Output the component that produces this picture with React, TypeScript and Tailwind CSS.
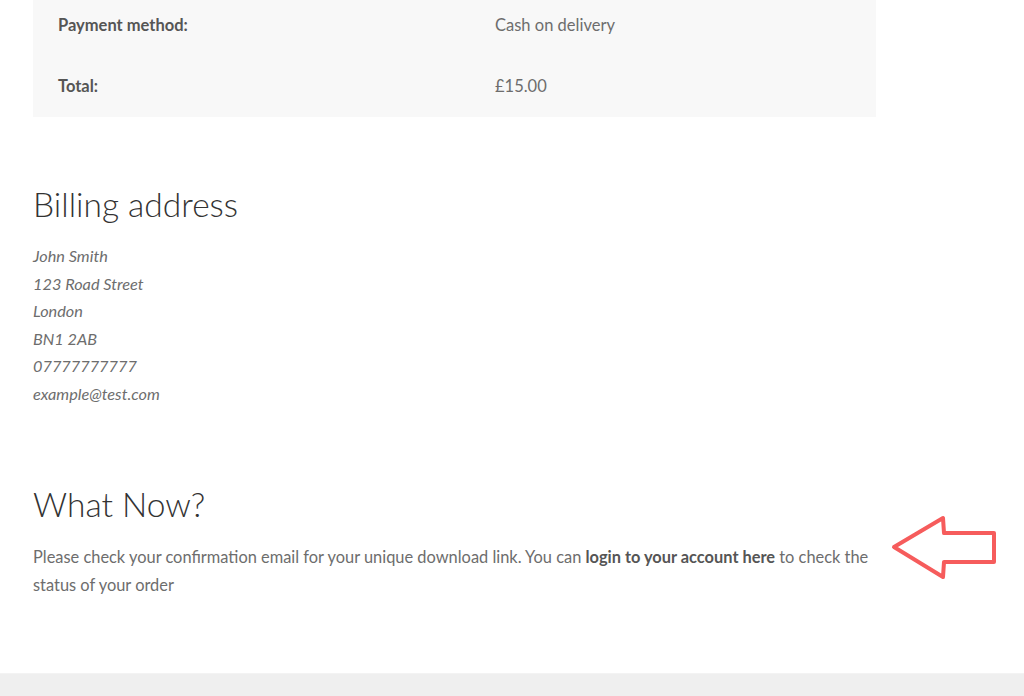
export default function App() {
  return (
    <div className="relative min-h-[696px] bg-white overflow-hidden text-[#6d6d6d]" style={{ fontFamily: "Lato, 'Noto Sans', sans-serif" }}>
      <main className="w-[843px] ml-[33px]">
        {/* Order summary table (top cut off) */}
        <div className="-mt-[5px] bg-[#f8f8f8]">
          <div className="flex items-center h-[61px] text-[16.5px]">
            <div className="w-[462px] pl-[25px] font-bold text-[#555]">Payment method:</div>
            <div>Cash on delivery</div>
          </div>
          <div className="flex items-center h-[61px] text-[16.5px]">
            <div className="w-[462px] pl-[25px] font-bold text-[#555]">Total:</div>
            <div>£15.00</div>
          </div>
        </div>

        {/* Billing address */}
        <h2 className="mt-[65px] text-[33.5px] leading-[44px] font-light text-[#333]">Billing address</h2>
        <address className="mt-[16px] text-[16.3px] leading-[27.5px] italic">
          John Smith<br />
          123 Road Street<br />
          London<br />
          BN1 2AB<br />
          07777777777<br />
          example@test.com
        </address>

        {/* What now */}
        <h2 className="mt-[75px] text-[33.5px] leading-[44px] font-light text-[#333]">What Now?</h2>
        <p className="mt-[17px] text-[16.4px] leading-[28px]">
          Please check your confirmation email for your unique download link. You can{" "}
          <strong className="font-bold text-[#555]">login to your account here</strong> to check the status of your order
        </p>
      </main>

      {/* Annotation arrow */}
      <svg className="absolute left-[890px] top-[514px]" width="110" height="68" viewBox="0 0 110 68">
        <polygon
          points="4,33 53,4 54,19 104,19 104,48 54,48 53,63"
          fill="white"
          stroke="#f65c5c"
          strokeWidth="4"
          strokeLinejoin="round"
        />
      </svg>

      <footer className="absolute left-0 right-0 top-[673px] h-[40px] bg-[#efefef] border-t border-[#f3f3f3]" />
    </div>
  );
}
